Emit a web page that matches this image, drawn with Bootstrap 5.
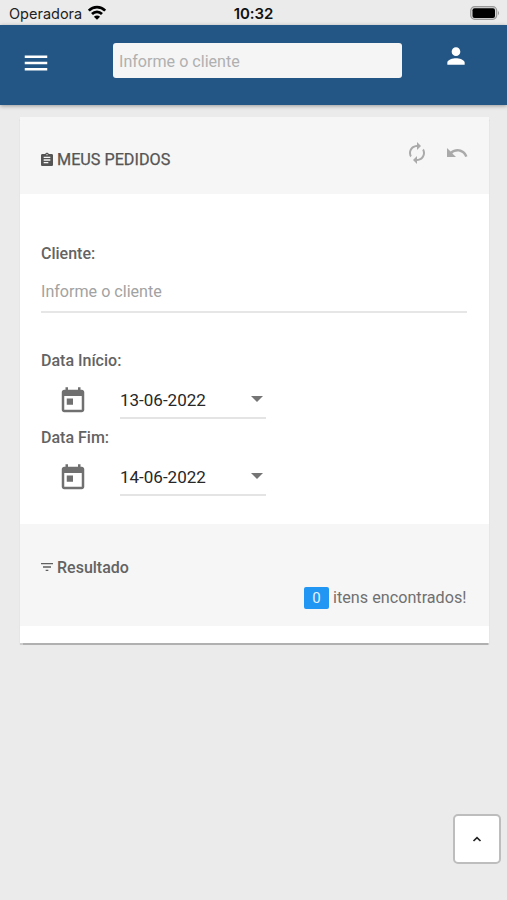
<!DOCTYPE html>
<html lang="pt-BR">
<head>
<meta charset="utf-8">
<meta name="viewport" content="width=device-width, initial-scale=1">
<title>Meus Pedidos</title>
<link href="https://cdn.jsdelivr.net/npm/bootstrap@5.3.0/dist/css/bootstrap.min.css" rel="stylesheet">
<style>
body{background:#ebebeb;color:#5f5f5f;font-family:Roboto,sans-serif;font-size:16px;line-height:20px;height:900px;overflow:hidden}
svg{display:block;fill:currentColor;flex:none}
.status{height:25px;padding:1px 7px 0 9px;color:#111;font:15px/26px Inter,sans-serif}
.status > div{flex:1 1 0}
.status .operator{font-size:14.5px;color:#222}
.status .clock{font-weight:600;letter-spacing:-.1px;flex:none;margin-left:-2px}
.topbar{height:80px;background:#235685;box-shadow:0 1px 4px rgba(0,0,0,.35);padding:18px 38px 0 21px}
.topbar .form-control{width:289px;height:35px;margin-left:62px;padding:2px 6px 0;border:0;border-radius:3px;background:#f5f5f5;font-size:16.1px;line-height:33px}
.form-control::placeholder{color:#b0b0b0;opacity:1}
.panel{margin:12px 18.5px 0 20px;height:526px;box-shadow:0 1.5px 1px rgba(0,0,0,.25)}
.panel-top{height:77px;background:#f6f6f6;padding:24px 20px 0 19px}
.title{margin-top:9px;gap:2px;font-weight:400;font-size:16.2px;color:#555;-webkit-text-stroke:.25px #555}
.title svg{margin-top:-1px}
.tools{color:#aaa;gap:16px}
.fields{height:330px;padding:50px 22px 0 21px}
.lbl{font-weight:500;display:block;color:#636363}
.client{border:0;border-bottom:2px solid #e6e6e6;border-radius:0;padding:0 0 2px;height:39px;margin:10px 0 38px;font-size:16.1px;background:transparent}
.client::placeholder{color:#a2a2a2}
.daterow{height:57px;padding-left:17px;color:#707070}
.daterow svg{margin-top:15px}
.datebox{width:146px;height:37px;margin:11px 0 0 32px;border-bottom:2px solid #e4e4e4;color:#272727;font-size:17px;padding-right:3px}
.caret{width:12px;height:6px;margin-top:-1px;background:#757575;clip-path:polygon(0 0,100% 0,50% 100%)}
.result{height:102px;background:#f6f6f6;padding:34px 22px 0 19px}
.heading{gap:2px}
.heading svg{margin-top:-2px}
.found{gap:4px;margin-top:9px;color:#707070;font-size:16.2px}
.count{width:25px;height:22px;border-radius:2px;background:#2196f3;color:#e4f3ff;font-size:15px;font-weight:400;line-height:22px;padding:0}
.totop{right:6px;bottom:36px;width:48px;height:50px;border:2px solid #bdbdbd;border-radius:5px;color:#222;padding:0}
</style>
<script src="https://cdn.jsdelivr.net/npm/bootstrap@5.3.0/dist/js/bootstrap.bundle.min.js"></script>
</head>
<body>
<div class="status d-flex">
  <div class="d-flex operator"><span>Operadora</span>
    <svg class="mt-1" style="margin-left:5px" width="20" height="16" viewBox="0 0 20 16" stroke="#000" stroke-width="2.7" fill="none"><path fill="none" d="M1.800 5.600C6.400 1 13.600 1 18.200 5.600M5 9c2.800-2.900 7.200-2.900 10 0"/><path d="M10 14.800 6.900 11.700c1.700-1.600 4.500-1.600 6.200 0z" fill="#000" stroke="none"/></svg>
  </div>
  <span class="clock">10:32</span>
  <div class="d-flex justify-content-end">
    <svg class="mt-1" width="31" height="16" viewBox="0 0 31 16"><rect x="1.700" y="1.700" width="26" height="12.600" rx="4" fill="#d8d8d8" stroke="#999" stroke-width="1.200"/><rect x="3.500" y="3.200" width="22.500" height="9.800" rx="2" fill="#000"/><path d="M29 5.700q2 2.300 0 4.600z" fill="#999"/></svg>
  </div>
</div>
<nav class="topbar d-flex align-items-start text-white">
  <svg style="margin-top:5px" width="30" height="30" viewBox="0 0 24 24"><path d="M3 18h18v-2H3v2zm0-5h18v-2H3v2zm0-7v2h18V6H3z"/></svg>
  <input class="form-control" type="text" placeholder="Informe o cliente">
  <svg class="ms-auto" width="26" height="26" viewBox="0 0 24 24"><path d="M12 12c2.210 0 4-1.790 4-4s-1.790-4-4-4-4 1.790-4 4 1.790 4 4 4zm0 2c-2.670 0-8 1.340-8 4v2h16v-2c0-2.660-5.330-4-8-4z"/></svg>
</nav>
<main class="panel bg-white">
  <header class="panel-top d-flex justify-content-between align-items-start">
    <div class="title d-flex align-items-center">
      <svg width="16" height="16" viewBox="0 0 24 24"><path d="M19 3h-4.180C14.400 1.840 13.300 1 12 1c-1.300 0-2.400.84-2.820 2H5c-1.100 0-2 .9-2 2v14c0 1.100.9 2 2 2h14c1.100 0 2-.9 2-2V5c0-1.100-.9-2-2-2zm-7 0c.55 0 1 .45 1 1s-.45 1-1 1-1-.45-1-1 .45-1 1-1zm2 14H7v-2h7v2zm3-4H7v-2h10v2zm0-4H7V7h10v2z"/></svg>
      <span>MEUS PEDIDOS</span>
    </div>
    <div class="tools d-flex">
      <svg width="24" height="24" viewBox="0 0 24 24"><path d="M12 6v3l4-4-4-4v3c-4.420 0-8 3.580-8 8 0 1.570.46 3.030 1.240 4.260L6.700 14.800c-.45-.83-.7-1.790-.7-2.800 0-3.310 2.690-6 6-6zm6.760 1.740L17.300 9.200c.44.84.7 1.790.7 2.800 0 3.310-2.690 6-6 6v-3l-4 4 4 4v-3c4.420 0 8-3.580 8-8 0-1.570-.46-3.030-1.240-4.260z"/></svg>
      <svg width="24" height="24" viewBox="0 0 24 24"><path d="M12.500 8c-2.650 0-5.050.99-6.900 2.600L2 7v9h9l-3.620-3.620c1.390-1.160 3.160-1.880 5.120-1.880 3.540 0 6.550 2.310 7.600 5.500l2.370-.78C21.080 11.030 17.150 8 12.500 8z"/></svg>
    </div>
  </header>
  <section class="fields">
    <label class="lbl" for="cliente">Cliente:</label>
    <input id="cliente" class="form-control client" type="text" placeholder="Informe o cliente">
    <span class="lbl">Data Início:</span>
    <div class="daterow d-flex align-items-start">
      <svg width="30" height="30" viewBox="0 0 24 24"><path d="M19 3h-1V1h-2v2H8V1H6v2H5c-1.110 0-1.990.9-1.990 2L3 19c0 1.100.89 2 2 2h14c1.100 0 2-.9 2-2V5c0-1.100-.9-2-2-2zm0 16H5V8h14v11zM7 10h5v5H7z"/></svg>
      <div class="datebox d-flex align-items-center justify-content-between"><span>13-06-2022</span><i class="caret"></i></div>
    </div>
    <span class="lbl">Data Fim:</span>
    <div class="daterow d-flex align-items-start">
      <svg width="30" height="30" viewBox="0 0 24 24"><path d="M19 3h-1V1h-2v2H8V1H6v2H5c-1.110 0-1.990.9-1.990 2L3 19c0 1.100.89 2 2 2h14c1.100 0 2-.9 2-2V5c0-1.100-.9-2-2-2zm0 16H5V8h14v11zM7 10h5v5H7z"/></svg>
      <div class="datebox d-flex align-items-center justify-content-between"><span>14-06-2022</span><i class="caret"></i></div>
    </div>
  </section>
  <section class="result">
    <div class="heading d-flex align-items-center">
      <svg width="16" height="16" viewBox="0 0 24 24"><path d="M10 18h4v-2h-4v2zM3 6v2h18V6H3zm3 7h12v-2H6v2z"/></svg>
      <span class="lbl">Resultado</span>
    </div>
    <div class="found d-flex justify-content-end align-items-center"><span class="count badge">0</span><span>itens encontrados!</span></div>
  </section>
</main>
<button class="totop btn bg-white position-fixed d-flex align-items-center justify-content-center" type="button" aria-label="Topo">
  <svg width="10" height="6" viewBox="0 0 10 6" style="fill:none" stroke="#222" stroke-width="1.700"><path d="M1.500 5 5 1.700 8.500 5"/></svg>
</button>
</body>
</html>
